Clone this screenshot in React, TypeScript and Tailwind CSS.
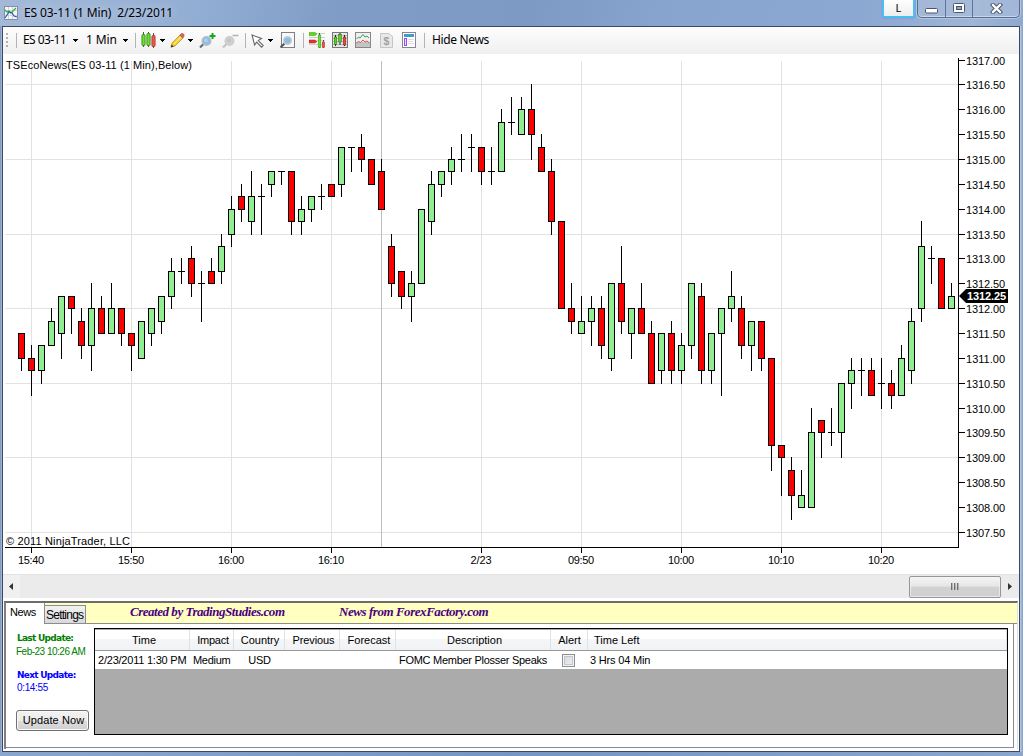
import React from "react";

// Each candle: high, body top, body bottom, low (in quarter-point ticks below 1317.00), direction.
type Candle = [number, number, number, number, "u" | "d" | "x"];

const candles: Candle[] = [
  [22, 22, 24, 25, "d"], [23, 24, 25, 27, "d"], [23, 23, 25, 26, "u"], [20, 21, 23, 23, "u"],
  [19, 19, 22, 24, "u"], [19, 19, 20, 22, "d"], [20, 21, 23, 24, "d"], [18, 20, 23, 25, "u"],
  [19, 20, 22, 22, "d"], [18, 20, 22, 22, "u"], [20, 20, 22, 23, "d"], [22, 22, 23, 25, "d"],
  [21, 21, 24, 24, "u"], [20, 20, 22, 23, "u"], [19, 19, 21, 22, "u"], [16, 17, 19, 20, "u"],
  [16, 17, 17, 18, "x"], [15, 16, 18, 19, "d"], [17, 18, 18, 21, "x"], [16, 17, 18, 18, "d"],
  [14, 15, 17, 18, "u"], [11, 12, 14, 15, "u"], [10, 11, 12, 13, "d"], [9, 11, 13, 14, "u"],
  [10, 11, 11, 14, "x"], [9, 9, 10, 11, "u"], [9, 9, 9, 10, "x"], [9, 9, 13, 14, "d"],
  [11, 12, 13, 14, "u"], [11, 11, 12, 13, "u"], [10, 11, 11, 12, "x"], [10, 10, 11, 11, "d"],
  [7, 7, 10, 11, "u"], [7, 7, 7, 9, "x"], [6, 7, 8, 9, "d"], [8, 8, 10, 10, "d"],
  [8, 9, 12, 12, "d"], [14, 15, 18, 19, "d"], [17, 17, 19, 20, "d"], [17, 18, 19, 21, "u"],
  [12, 12, 18, 18, "u"], [9, 10, 13, 14, "u"], [9, 9, 10, 11, "u"], [7, 8, 9, 10, "u"],
  [6, 8, 8, 9, "x"], [6, 7, 7, 9, "x"], [7, 7, 9, 10, "d"], [7, 9, 9, 10, "x"],
  [4, 5, 9, 9, "u"], [3, 5, 5, 6, "x"], [3, 4, 6, 6, "u"], [2, 4, 6, 8, "d"],
  [6, 7, 9, 9, "d"], [8, 9, 13, 14, "d"], [13, 13, 20, 20, "d"], [18, 20, 21, 22, "d"],
  [19, 21, 22, 22, "u"], [19, 20, 21, 23, "u"], [19, 20, 23, 24, "d"], [18, 18, 24, 25, "u"],
  [15, 18, 21, 22, "d"], [20, 20, 22, 24, "u"], [18, 20, 22, 22, "d"], [21, 22, 26, 26, "d"],
  [22, 22, 25, 26, "u"], [21, 22, 25, 26, "d"], [22, 23, 25, 26, "u"], [18, 18, 23, 24, "u"],
  [18, 19, 25, 26, "d"], [22, 22, 25, 26, "u"], [20, 20, 22, 27, "u"], [17, 19, 20, 21, "u"],
  [19, 20, 23, 24, "d"], [21, 21, 23, 25, "u"], [21, 21, 24, 25, "d"], [24, 24, 31, 33, "d"],
  [31, 31, 32, 35, "d"], [32, 33, 35, 37, "d"], [33, 35, 36, 36, "u"], [28, 30, 36, 36, "u"],
  [29, 29, 30, 32, "d"], [28, 30, 30, 31, "x"], [26, 26, 30, 32, "u"], [24, 25, 26, 28, "u"],
  [24, 25, 25, 27, "x"], [24, 25, 27, 27, "d"], [24, 26, 26, 28, "x"], [25, 26, 27, 28, "d"],
  [23, 24, 27, 27, "u"], [20, 21, 25, 26, "u"], [13, 15, 20, 21, "u"], [15, 16, 16, 18, "x"],
  [16, 16, 20, 20, "d"], [18, 19, 20, 20, "u"],
];

const times: [number, string][] = [
  [31, "15:40"], [131, "15:50"], [231, "16:00"], [331, "16:10"], [481, "2/23"],
  [581, "09:50"], [681, "10:00"], [781, "10:10"], [881, "10:20"],
];

const TOP = 54;
const yOf = (t: number) => Math.round(59.5 + 12.43 * t) - TOP;
const prices = Array.from({ length: 20 }, (_, i) => i * 2);

function Chart() {
  return (
    <svg width="1016" height="520" viewBox="3 0 1016 520" className="block shrink-0 bg-white" fontFamily="'Liberation Sans', Arial, sans-serif" fontSize="11">
      <g shapeRendering="crispEdges">
        {[2, 8, 14, 20, 26, 32, 38].map((t) => (
          <rect key={t} x="5" y={yOf(t)} width="953" height="1" fill="#e2e2e2" />
        ))}
        {times.map(([x]) => (
          <rect key={x} x={x} y="7" width="1" height="486" fill="#e2e2e2" />
        ))}
        <rect x="381" y="7" width="1" height="486" fill="#bdbdbd" />
        {candles.map(([h, a, b, l, k], i) => {
          const x = 21 + i * 10;
          return (
            <g key={i}>
              <rect x={x} y={yOf(h)} width="1" height={yOf(l) - yOf(h) + 1} fill="#000" />
              {k === "x" ? (
                <rect x={x - 3} y={yOf(a)} width="7" height="1" fill="#000" />
              ) : (
                <>
                  <rect x={x - 3} y={yOf(a)} width="7" height={yOf(b) - yOf(a) + 1} fill="#000" />
                  <rect x={x - 2} y={yOf(a) + 1} width="5" height={yOf(b) - yOf(a) - 1} fill={k === "u" ? "#90ee90" : "#ff0000"} />
                </>
              )}
            </g>
          );
        })}
        <rect x="958" y="4" width="1" height="490" fill="#000" />
        <rect x="5" y="493" width="954" height="1" fill="#000" />
        {times.map(([x]) => (
          <rect key={x} x={x} y="493" width="1" height="6" fill="#000" />
        ))}
        {prices.map((t) => (
          <rect key={t} x="958" y={yOf(t)} width="7" height="1" fill="#000" />
        ))}
      </g>
      {prices.map((t) => (
        <text key={t} x="966" y={yOf(t) + 5} textLength="39">{(1317 - t / 4).toFixed(2)}</text>
      ))}
      {times.map(([x, s]) => (
        <text key={x} x={x} y="510" textAnchor="middle" textLength={s === "2/23" ? 21 : 26}>{s}</text>
      ))}
      <path d="M959 242 L966 235 H1008 V249 H966 Z" fill="#000" />
      <text x="967" y="246" fill="#fff" fontWeight="bold" textLength="39">1312.25</text>
      <text x="6" y="15" textLength="186">TSEcoNews(ES 03-11 (1 Min),Below)</text>
      <text x="6" y="491" textLength="124">© 2011 NinjaTrader, LLC</text>
    </svg>
  );
}

const Sep = () => <span className="h-[15px] w-px shrink-0 bg-[#b4b4b4]" />;
const Caret = () => (
  <svg width="5" height="3" viewBox="0 0 5 3" className="shrink-0" shapeRendering="crispEdges"><path d="M0 0h5v1h-1v1h-1v1h-1v-1h-1v-1h-1z" /></svg>
);
const Slot = ({ className, children }: { className: string; children?: React.ReactNode }) => (
  <span className={"flex shrink-0 items-center " + className}>{children}</span>
);

function Magnifier({ plus }: { plus: boolean }) {
  return (
    <svg width="17" height="17" viewBox="0 0 17 17">
      <path d="M1 15.5l4-4" stroke={plus ? "#6a6a6a" : "#c2c2c2"} strokeWidth="2.2" />
      <circle cx="7.5" cy="9" r="4.3" fill={plus ? "#8dbce0" : "#d0d0d0"} stroke={plus ? "#b3bec6" : "#cdcdcd"} strokeWidth="1.4" />
      <circle cx="7" cy="8.5" r="2" fill={plus ? "#a9d2ef" : "#c4c4c4"} />
      {plus ? <path d="M10.5 4h6M13.5 1v6" stroke="#12a825" strokeWidth="2" /> : <path d="M10.5 3.5h6" stroke="#b5b5b5" strokeWidth="1.6" />}
    </svg>
  );
}

function Toolbar() {
  return (
    <div className="flex h-[27px] shrink-0 items-center bg-linear-to-b from-[#fdfdfd] to-[#f0f0f0] pb-px font-['Noto_Sans',sans-serif] text-[12px] whitespace-pre text-black">
      <Slot className="w-[20px] gap-[8px] pl-[3px]">
        <svg width="2" height="14" viewBox="0 0 2 14"><path d="M1 0v14" stroke="#b0b0b0" strokeWidth="2" strokeDasharray="2 2" /></svg>
        <Sep />
      </Slot>
      <Slot className="w-[47px] tracking-[-0.58px]">ES 03-11</Slot>
      <Slot className="w-[16px] pl-[3px]"><Caret /></Slot>
      <Slot className="w-[34px] tracking-[-0.1px]">1 Min</Slot>
      <Slot className="w-[15px] pl-[3px]"><Caret /></Slot>
      <Slot className="w-[6px]"><Sep /></Slot>
      <Slot className="w-[19px]">
        <svg width="16" height="16" viewBox="0 0 16 16">
          <path d="M2.5 0v15M7.5 0v15M12.5 1v15" stroke="#555" />
          <rect x=".9" y="2.5" width="3.2" height="11" rx="1" fill="#63e32a" stroke="#3d7a20" strokeWidth=".8" />
          <rect x="5.9" y="1.5" width="3.2" height="12" rx="1" fill="#63e32a" stroke="#3d7a20" strokeWidth=".8" />
          <rect x="10.9" y="3.5" width="3.2" height="11" rx="1" fill="#f0564e" stroke="#a8342c" strokeWidth=".8" />
        </svg>
      </Slot>
      <Slot className="w-[10px]"><Caret /></Slot>
      <Slot className="w-[19px]">
        <svg width="15" height="15" viewBox="0 0 15 15">
          <path d="M1 14l1.2-4L10 2l3 3-8 8z" fill="#f8d035" stroke="#b98b20" strokeWidth=".8" />
          <path d="M10 2l1.5-1.4q1-.5 2 .5t.4 2L12.8 5z" fill="#e8685e" stroke="#9b4438" strokeWidth=".7" />
          <path d="M.7 14.4l1-3 2 2z" fill="#333" />
          <path d="M4 11l7-7" stroke="#fff09a" />
        </svg>
      </Slot>
      <Slot className="w-[10px] -ml-[1px]"><Caret /></Slot>
      <Slot className="ml-px w-[23px]"><Magnifier plus /></Slot>
      <Slot className="w-[23px]"><Magnifier plus={false} /></Slot>
      <Slot className="w-[6px]"><Sep /></Slot>
      <Slot className="w-[17px]">
        <svg width="14" height="15" viewBox="0 0 14 15"><path d="M1 2l9.5 3.5-3.3 2.1 5 5-1.6 1.6-5-5L3.6 12z" fill="#fff" stroke="#666" strokeWidth="1.1" /></svg>
      </Slot>
      <Slot className="w-[12px]"><Caret /></Slot>
      <Slot className="w-[23px]">
        <svg width="16" height="16" viewBox="0 0 16 16">
          <rect x="1.5" y=".5" width="13" height="15" fill="#f8f8f8" stroke="#7c7f88" />
          <path d="M.5 15.5l4-4" stroke="#555" strokeWidth="2" />
          <circle cx="7.5" cy="8.5" r="3.8" fill="#8bbde0" stroke="#c3cbd1" strokeWidth="1.4" />
        </svg>
      </Slot>
      <Slot className="w-[6px]"><Sep /></Slot>
      <Slot className="w-[23px]">
        <svg width="16" height="16" viewBox="0 0 16 16">
          <path d="M8 1.5h8M0 5.5h16M8 8.5h8M0 12.5h13" stroke="#cfcfcf" />
          <path d="M0 .5h6l2 1.5-2 1.5H0z" fill="#58dc16" stroke="#3b9a13" strokeWidth=".5" />
          <path d="M0 8h6l2 1.5L6 11H0z" fill="#ee3030" stroke="#a31d1d" strokeWidth=".5" />
          <path d="M10.5 1v15M14.5 8v8" stroke="#555" />
          <rect x="9.2" y="3" width="2.6" height="12.5" fill="#6be030" stroke="#3f8a1d" strokeWidth=".5" />
          <rect x="13.2" y="10" width="2.4" height="5.5" fill="#f05048" stroke="#a0302a" strokeWidth=".5" />
        </svg>
      </Slot>
      <Slot className="w-[23px]">
        <svg width="16" height="16" viewBox="0 0 16 16">
          <rect x=".5" y=".5" width="15" height="15" fill="#e6e6e6" stroke="#777" />
          <path d="M1 3.5h14M1 6.5h14M1 9.5h14M1 12.5h14" stroke="#bbb" />
          <path d="M3.5 3v11M8 1v12M12.5 3v11" stroke="#222" />
          <rect x="2.2" y="5" width="2.6" height="7.5" fill="#4fd81d" stroke="#286010" strokeWidth=".5" />
          <rect x="6.7" y="2.5" width="2.6" height="7.5" fill="#4fd81d" stroke="#286010" strokeWidth=".5" />
          <rect x="11.2" y="5" width="2.6" height="8" fill="#f04040" stroke="#80201c" strokeWidth=".5" />
        </svg>
      </Slot>
      <Slot className="w-[25px]">
        <svg width="16" height="16" viewBox="0 0 16 16">
          <rect x=".5" y=".5" width="15" height="15" fill="#efefef" stroke="#888" />
          <rect x="1" y="10" width="14" height="5" fill="#c4c4c4" />
          <path d="M1.5 7l2-2 1.5 1L8 2.5l2 2.5 2-1 2 2" stroke="#35a35c" fill="none" />
          <path d="M1.5 11l2-1.5 2 1L8 8l2 2 2-1 2.5 2" stroke="#e05151" fill="none" />
        </svg>
      </Slot>
      <Slot className="w-[22px]">
        <svg width="13" height="15" viewBox="0 0 13 15">
          <path d="M.5.5h8.5l3.5 3v11H.5z" fill="#e8e8e8" stroke="#c6c6c6" />
          <text x="6.3" y="11.5" textAnchor="middle" fontSize="10.5" fontWeight="bold" fontFamily="Liberation Sans, sans-serif" fill="#a0a0a0">$</text>
        </svg>
      </Slot>
      <Slot className="w-[22px]">
        <svg width="14" height="16" viewBox="0 0 14 16">
          <rect x=".5" y=".5" width="13" height="15" fill="#fff" stroke="#85859c" />
          <rect x="2" y="2" width="10" height="3" fill="#419bcc" />
          <rect x="2.5" y="6.5" width="2" height="7" fill="#eddfff" stroke="#8e4fee" />
          <path d="M6 7.5h6M6 9.5h5M6 11.5h6" stroke="#dcdce6" />
        </svg>
      </Slot>
      <Slot className="w-[8px]"><Sep /></Slot>
      <span className="tracking-[-0.35px]">Hide News</span>
    </div>
  );
}

function TitleBar() {
  return (
    <div className="flex h-[26px] shrink-0 bg-[linear-gradient(100deg,#a4b9d8_0%,#92add3_20%,#7f9cc6_33%,#7d9ac4_52%,#88a5cf_66%,#8aa8d2_84%,#9eb5d7_95%,#8da9d0_100%)] font-['Noto_Sans',sans-serif] text-[12px] text-black">
      <div className="flex h-[26px] items-center pl-[4px]">
        <svg width="14" height="14" viewBox="0 0 14 14">
          <rect x=".5" y=".5" width="13" height="13" fill="#f5f6fa" stroke="#8490a8" />
          <path d="M4.5 1v12M8.5 1v12M1 4.5h12M1 9.5h12" stroke="#cdd4e0" />
          <path d="M1 4l2 2 2-1 2 2 5-5" stroke="#31b33a" strokeWidth="1.4" fill="none" />
          <path d="M1 12l4-6 3 1 2 3 3 1" stroke="#315ca6" strokeWidth="1.2" fill="none" />
        </svg>
        <span className="ml-[6px] whitespace-pre tracking-[-0.13px] [text-shadow:0_0_8px_#dce7f7]">ES 03-11 (1 Min)  2/23/2011</span>
      </div>
      <div className="ml-auto flex items-start">
        <div className="flex h-[18px] w-[33px] justify-center rounded-b-[2px] border-2 border-t-0 border-[#42c4ef] bg-linear-to-b from-white to-[#eee] text-[11px] leading-[15px] outline-1 outline-[#a77be0]/50">L</div>
        <div className="ml-[2px] mr-[3px] flex h-[18px] w-[103px] rounded-b-[5px] border border-t-0 border-[#5b6d8d] bg-[#a9bcda]/70 shadow-[inset_0_-1px_0_#c9d7ea,0_0_0_1px_#b3c6e0]">
          <div className="flex w-[28px] items-center justify-center border-r border-[#61759a] pt-[4px]">
            <svg width="13" height="6"><rect x=".5" y=".5" width="12" height="4.5" rx="1" fill="#fff" stroke="#4c566b" /></svg>
          </div>
          <div className="flex w-[27px] items-center justify-center border-r border-[#61759a] pb-px">
            <svg width="12" height="10"><rect x=".5" y=".5" width="11" height="9" rx="1" fill="#fff" stroke="#4c566b" /><rect x="3.5" y="3.5" width="5" height="3" fill="#93a7c8" stroke="#4c566b" /></svg>
          </div>
          <div className="flex flex-1 items-center justify-center pb-px">
            <svg width="13" height="11" viewBox="0 0 13 11"><path d="M3 2l7 7M10 2l-7 7" stroke="#4c566b" strokeWidth="4.4" strokeLinecap="square" /><path d="M3 2l7 7M10 2l-7 7" stroke="#fff" strokeWidth="2.4" strokeLinecap="square" /></svg>
          </div>
        </div>
      </div>
    </div>
  );
}

function ScrollBar() {
  return (
    <div className="flex h-[24px] shrink-0 items-center border-t border-[#e3e3e3] bg-[#ebebeb]">
      <div className="flex h-full w-[17px] items-center bg-[#f0f0f0] pl-[6px]">
        <svg width="4" height="7"><path d="M4 0v7L0 3.5z" fill="#333" /></svg>
      </div>
      <div className="ml-auto flex h-[22px] w-[92px] items-center justify-center gap-px rounded-[2px] border border-[#969696] bg-[linear-gradient(#f4f4f4_0%,#e6e6e6_46%,#d2d2d4_50%,#cfcfd1_100%)] shadow-[inset_0_0_0_1px_#f5f5f5aa]">
        {[0, 1, 2].map((i) => <span key={i} className="h-[7px] w-[2px] border-l border-[#555] bg-[#aaa] opacity-80" />)}
      </div>
      <div className="flex w-[18px] justify-center"><svg width="4" height="7"><path d="M0 0v7L4 3.5z" fill="#333" /></svg></div>
    </div>
  );
}

const cols = "grid grid-cols-[95px_44px_51px_55px_56px_155px_37px_1fr]";
const headers: [string, string][] = [
  ["Time", "justify-center pl-[4px]"], ["Impact", "justify-center pl-[3px] tracking-[-0.25px]"], ["Country", "justify-center pl-[2px]"], ["Previous", "justify-center pl-[3px] tracking-[-0.1px]"],
  ["Forecast", "justify-center pl-[3px]"], ["Description", "justify-center pl-[3px]"], ["Alert", "justify-center pl-px"], ["Time Left", "justify-start pl-[6px]"],
];

function NewsPanel() {
  return (
    <div className="ml-px mr-px flex h-[148px] shrink-0 flex-col border-t-2 border-r border-l-2 border-[#808080] border-t-[#6d6d6d] border-r-[#e0e0e0] bg-[#fdfdfd] font-['Liberation_Sans',Arial,sans-serif] text-[11px] text-black">
      <div className="flex h-[21px] shrink-0 items-end bg-[#ffffc0]">
        <div className="h-[21px] w-[39px] border-r border-[#898c95] bg-white pl-[4px] leading-[19px] tracking-[-0.4px]">News</div>
        <div className="flex h-[21px] flex-1 items-end border-b border-[#898c95]">
          <div className="h-[18px] w-[41px] border-t border-r border-[#898c95] bg-linear-to-b from-[#f2f2f2] to-[#d9d9d9] pl-px text-[12px] leading-[19px] tracking-[-0.75px]">Settings</div>
          <div className="flex h-full items-center pb-[3px] pl-[44px] font-['Liberation_Serif',serif] text-[13px] font-bold italic text-[#4b0082]">
            <span className="w-[209px] tracking-[-0.47px]">Created by TradingStudies.com</span>
            <span className="tracking-[-0.45px]">News from ForexFactory.com</span>
          </div>
        </div>
      </div>
      <div className="mr-[3px] flex h-[124px] shrink-0 border-r border-b border-[#898c95] bg-white">
        <div className="flex w-[88px] shrink-0 flex-col pl-[11px] text-[10px] whitespace-nowrap">
          <div className="mt-[8px] font-['DejaVu_Sans',sans-serif] text-[9px] leading-[13px] font-bold tracking-[-0.72px] text-[#008000]">Last Update:</div>
          <div className="-ml-px leading-[13px] tracking-[-0.5px] text-[#008000]">Feb-23 10:26 AM</div>
          <div className="mt-[11px] font-['DejaVu_Sans',sans-serif] text-[9px] leading-[13px] font-bold tracking-[-0.72px] text-[#0000ff]">Next Update:</div>
          <div className="leading-[12px] tracking-[-0.35px] text-[#0000ff]">0:14:55</div>
          <button className="-ml-px mt-[16px] h-[21px] w-[73px] shrink-0 rounded-[3px] border border-[#707070] bg-[linear-gradient(#f2f2f2_0%,#ebebeb_50%,#dddddd_51%,#cfcfcf_100%)] pl-[2px] text-[11px] tracking-[0.12px] shadow-[inset_0_0_0_1px_#fafafa]">Update Now</button>
        </div>
        <div className="mt-[4px] h-[107px] w-[914px] shrink-0 border border-black bg-[#ababab]">
          <div className={cols + " h-[22px] border-t border-b border-t-[#aaa] border-b-[#999] bg-[linear-gradient(#fff_0%,#fff_45%,#f5f6f8_46%,#f1f2f4_100%)]"}>
            {headers.map(([h, c]) => (
              <div key={h} className={"flex items-center border-r border-[#dfe1e5] " + c}>{h}</div>
            ))}
          </div>
          <div className={cols + " h-[18px] items-center bg-white whitespace-nowrap"}>
            <span className="pl-[3px] tracking-[-0.22px]">2/23/2011 1:30 PM</span>
            <span className="pl-[3px] tracking-[-0.3px]">Medium</span>
            <span className="text-center tracking-[-0.3px]">USD</span>
            <span />
            <span />
            <span className="pl-[3px] tracking-[-0.28px]">FOMC Member Plosser Speaks</span>
            <span className="flex justify-center pr-[2px]"><span className="h-[13px] w-[13px] border border-[#8e8f8f] bg-linear-to-br from-[#cfd3da] to-[#f5f5f5] shadow-[inset_0_0_0_1px_#f4f4f4,inset_0_0_0_2px_#c4c8cc]" /></span>
            <span className="pl-[2px] tracking-[-0.18px]">3 Hrs 04 Min</span>
          </div>
        </div>
      </div>
    </div>
  );
}

export default function App() {
  return (
    <div className="flex h-[756px] w-[1023px] flex-col overflow-hidden bg-[#8faad0]">
      <TitleBar />
      <div className="flex h-[726px] shrink-0">
        <div className="w-[2px] shrink-0 bg-linear-to-r from-[#7590bd] to-[#a9c1e0]" />
        <div className="flex h-[726px] w-[1018px] shrink-0 flex-col border border-[#3c4961] bg-white">
          <Toolbar />
          <Chart />
          <ScrollBar />
          <div className="h-[3px] shrink-0 bg-white" />
          <NewsPanel />
        </div>
        <div className="flex-1 bg-linear-to-r from-[#b9cde6] to-[#809dc8]" />
      </div>
      <div className="flex-1 bg-linear-to-r from-[#89a6ce] via-[#7595c4] to-[#89a6ce]" />
    </div>
  );
}
